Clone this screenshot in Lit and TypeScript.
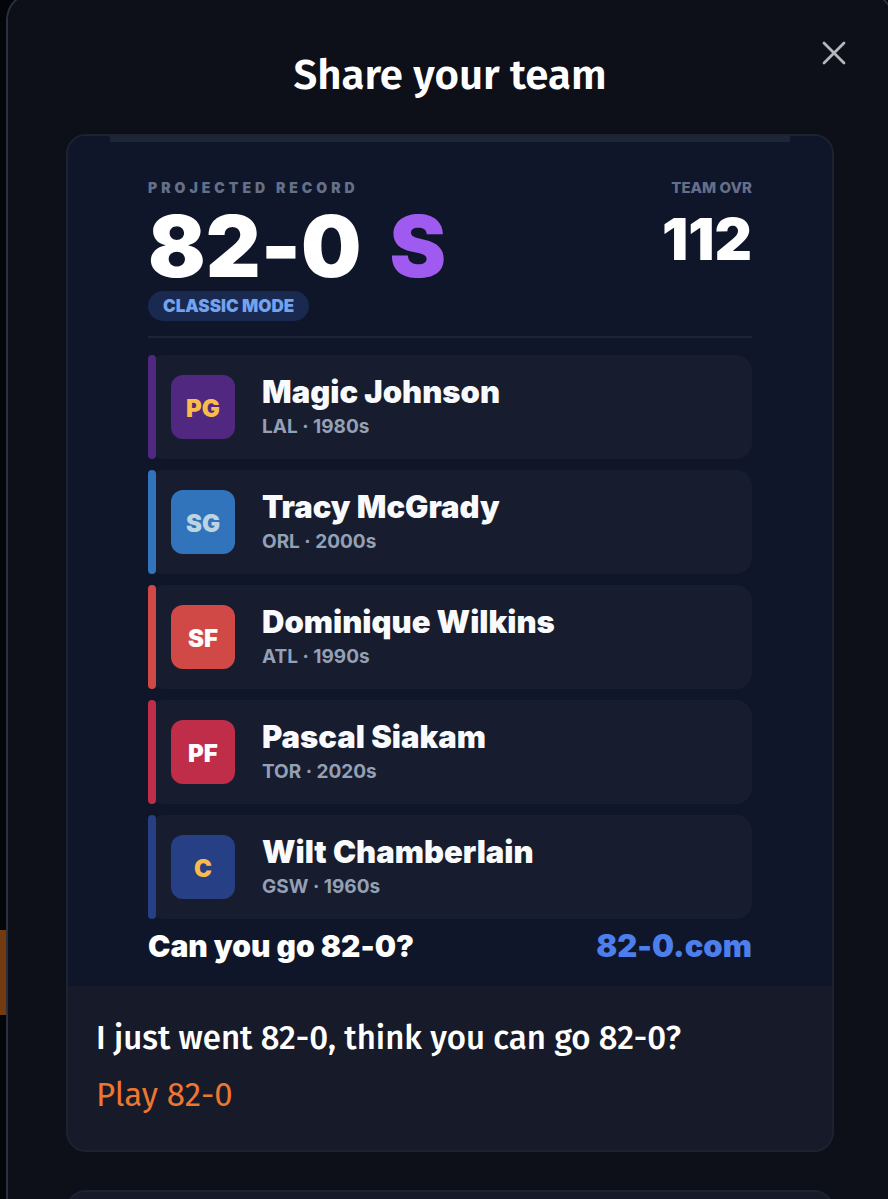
import { LitElement, html, css } from "lit";
import { customElement, property } from "lit/decorators.js";
import { styleMap } from "lit/directives/style-map.js";

interface Player {
  position: string;
  name: string;
  team: string;
  era: string;
  color: string;
  ink: string;
}

const PLAYERS: Player[] = [
  { position: "PG", name: "Magic Johnson", team: "LAL", era: "1980s", color: "#50287f", ink: "#f9bc4b" },
  { position: "SG", name: "Tracy McGrady", team: "ORL", era: "2000s", color: "#3174bc", ink: "#bcd4e2" },
  { position: "SF", name: "Dominique Wilkins", team: "ATL", era: "1990s", color: "#d14947", ink: "#ffffff" },
  { position: "PF", name: "Pascal Siakam", team: "TOR", era: "2020s", color: "#bf2d48", ink: "#ffffff" },
  { position: "C", name: "Wilt Chamberlain", team: "GSW", era: "1960s", color: "#263f85", ink: "#f9bc4b" },
];

@customElement("player-row")
export class PlayerRow extends LitElement {
  @property({ attribute: false }) player!: Player;

  static styles = css`
    :host {
      display: block;
    }
    .row {
      display: flex;
      align-items: center;
      height: 104px;
      border-radius: 16px;
      background: #171d2f;
    }
    .stripe {
      align-self: stretch;
      width: 8px;
      border-radius: 4px;
    }
    .badge {
      display: grid;
      place-items: center;
      box-sizing: border-box;
      width: 64px;
      height: 64px;
      margin: 0 27px 0 15px;
      padding-top: 3px;
      border-radius: 12px;
      font-size: 24px;
      font-weight: 900;
      line-height: 28px;
    }
    .name {
      font-size: 31px;
      font-weight: 900;
      line-height: 40px;
      color: #f8fafc;
    }
    .meta {
      font-size: 19px;
      font-weight: 700;
      line-height: 30px;
      color: #94a0b5;
    }
  `;

  render() {
    const p = this.player;
    return html`
      <div class="row">
        <div class="stripe" style=${styleMap({ background: p.color })}></div>
        <div class="badge" style=${styleMap({ background: p.color, color: p.ink })}>${p.position}</div>
        <div>
          <div class="name">${p.name}</div>
          <div class="meta">${p.team} · ${p.era}</div>
        </div>
      </div>
    `;
  }
}

@customElement("app-root")
export class AppRoot extends LitElement {
  static styles = css`
    :host {
      display: block;
      position: relative;
      height: 100vh;
      overflow: hidden;
      background: #040508;
      font-family: "Fira Sans", "Noto Sans", sans-serif;
      color: #ffffff;
    }
    .backdrop-button {
      position: absolute;
      left: 0;
      top: 930px;
      width: 8px;
      height: 85px;
      background: #743a10;
    }
    .dialog {
      position: relative;
      box-sizing: border-box;
      min-height: calc(100% + 40px);
      margin: -8px -6px 0 6px;
      padding: 53px 58px 0;
      border: 2px solid #2b303e;
      border-radius: 28px;
      background: #0d0f19;
    }
    .close {
      position: absolute;
      top: 37px;
      right: 36px;
      display: grid;
      place-items: center;
      width: 44px;
      height: 44px;
      padding: 0;
      border: 0;
      background: none;
      color: #b6b7bb;
      cursor: pointer;
    }
    .title {
      margin: 0 0 31px;
      font-size: 42px;
      font-weight: 600;
      line-height: 56px;
      text-align: center;
    }
    .card {
      border: 2px solid #1d2230;
      border-radius: 20px;
      overflow: hidden;
      background: #171a28;
    }
    .poster {
      padding: 0 80px 17px;
      background: #101629;
      font-family: Inter, sans-serif;
      font-variant-ligatures: no-contextual;
    }
    .top-bar {
      height: 6px;
      margin: 0 -38px 37px;
      background: #1d2636;
    }
    .summary {
      display: flex;
      justify-content: space-between;
      padding-bottom: 15px;
      border-bottom: 2px solid #1e2435;
      margin-bottom: 17px;
    }
    .label {
      font-size: 15px;
      font-weight: 800;
      line-height: 18px;
      color: #64708a;
    }
    .spaced {
      font-size: 14px;
      font-weight: 900;
      letter-spacing: 4px;
    }
    .record {
      display: flex;
      gap: 28px;
      padding: 10px 0 4px;
      font-size: 85px;
      font-weight: 900;
      line-height: 80px;
    }
    .grade {
      color: #9f5af0;
    }
    .mode {
      display: inline-block;
      padding: 0 15px;
      border-radius: 15px;
      background: #1a294f;
      color: #72a3f0;
      font-size: 17px;
      font-weight: 900;
      line-height: 30px;
    }
    .rating {
      text-align: right;
    }
    .rating-value {
      font-size: 58px;
      font-weight: 900;
      line-height: 84px;
    }
    .roster {
      display: grid;
      gap: 11px;
    }
    .footer {
      display: flex;
      justify-content: space-between;
      align-items: baseline;
      font-weight: 900;
      font-size: 30px;
      line-height: 46px;
      padding-top: 4px;
    }
    .site {
      font-size: 31px;
      color: #4d7fec;
    }
    .caption {
      padding: 24px 28px 26px;
      font-size: 33px;
      line-height: 57px;
    }
    .message {
      margin: 0;
      font-weight: 500;
    }
    .play {
      color: #ee762f;
      text-decoration: none;
    }
    .next {
      height: 120px;
      margin-top: 38px;
    }
  `;

  render() {
    return html`
      <div class="backdrop-button"></div>
      <section class="dialog" role="dialog" aria-labelledby="title">
        <button class="close" aria-label="Close">
          <svg width="24" height="24" viewBox="0 0 24 24" fill="none" stroke="currentColor" stroke-width="2.8" stroke-linecap="round">
            <path d="M2 2L22 22M22 2L2 22" />
          </svg>
        </button>
        <h1 class="title" id="title">Share your team</h1>
        <article class="card">
          <div class="poster">
            <div class="top-bar"></div>
            <div class="summary">
              <div>
                <div class="label spaced">PROJECTED RECORD</div>
                <div class="record"><span>82-0</span><span class="grade">S</span></div>
                <div class="mode">CLASSIC MODE</div>
              </div>
              <div class="rating">
                <div class="label">TEAM OVR</div>
                <div class="rating-value">112</div>
              </div>
            </div>
            <div class="roster">
              ${PLAYERS.map((p) => html`<player-row .player=${p}></player-row>`)}
            </div>
            <div class="footer"><span>Can you go 82-0?</span><span class="site">82-0.com</span></div>
          </div>
          <div class="caption">
            <p class="message">I just went 82-0, think you can go 82-0?</p>
            <a class="play" href="#">Play 82-0</a>
          </div>
        </article>
        <div class="card next"></div>
      </section>
    `;
  }
}
